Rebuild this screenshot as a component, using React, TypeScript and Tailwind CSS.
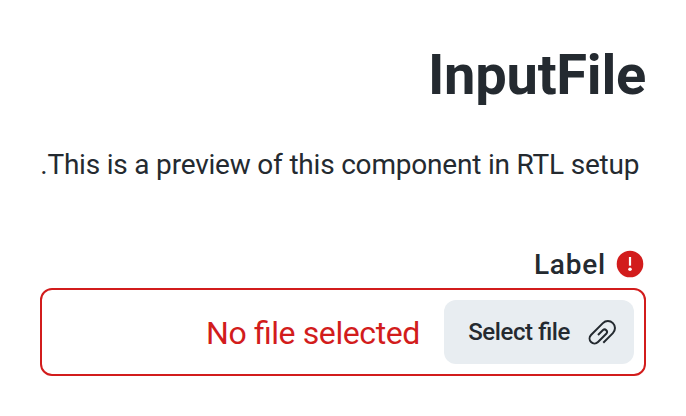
export default function App() {
  return (
    <main dir="rtl" className="h-[416px] w-[686px] bg-white px-10 pt-[43px] font-['Roboto',sans-serif] text-[#242a30]">
      <h1 className="text-[56px] leading-[64px] font-bold tracking-[-0.24px]">InputFile</h1>
      <p className="mt-[42px] text-[28px] leading-8 tracking-[-0.2px] whitespace-nowrap">&nbsp;This is a preview of this component in RTL setup.</p>
      <div className="mt-[63px] flex h-10 items-center gap-[10px] pr-[2px]">
        <svg className="size-7" viewBox="0 0 28 28">
          <circle cx="14" cy="14" r="13.3" fill="#d21c1c" />
          <path d="M14 7v8.7" stroke="#fff" strokeWidth="2.2" />
          <circle cx="14" cy="19.3" r="1.8" fill="#fff" />
        </svg>
        <span className="pt-[2px] text-[28px] leading-8 font-medium tracking-[0.8px]">Label</span>
      </div>
      <div className="mt-1 flex h-[88px] items-center rounded-xl border-2 border-[#d21c1c] px-[10px]">
        <button className="flex h-16 w-[190px] items-center gap-4 rounded-xl bg-[#e8edf1] px-4 text-2xl font-medium tracking-[-0.4px] [font-feature-settings:'liga'_1]">
          <svg className="size-8" viewBox="0 0 32 32" fill="none" stroke="currentColor" strokeWidth="2">
            <path d="M12 19L17 14A2.5 2.5 0 0 1 20.5 17.5L12 26A4.95 4.95 0 0 1 5 19L16.9 7.1A7.07 7.07 0 0 1 26.9 17.1L17.3 26.7" />
          </svg>
          Select file
        </button>
        <span className="mr-6 pt-[2px] text-[32px] tracking-[-0.4px] text-[#d21c1c] [font-feature-settings:'liga'_1]">No file selected</span>
      </div>
    </main>
  );
}
